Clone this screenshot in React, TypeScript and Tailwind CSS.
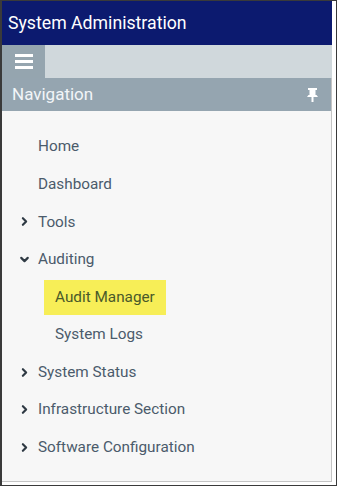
import { ChevronRight, ChevronDown } from "lucide-react";

type Item = { label: string; level: number; chevron?: "right" | "down"; active?: boolean };

const items: Item[] = [
  { label: "Home", level: 0 },
  { label: "Dashboard", level: 0 },
  { label: "Tools", level: 0, chevron: "right" },
  { label: "Auditing", level: 0, chevron: "down" },
  { label: "Audit Manager", level: 1, active: true },
  { label: "System Logs", level: 1 },
  { label: "System Status", level: 0, chevron: "right" },
  { label: "Infrastructure Section", level: 0, chevron: "right" },
  { label: "Software Configuration", level: 0, chevron: "right" },
];

function Pin() {
  return (
    <svg width="11" height="14" viewBox="0 0 11 14" fill="#ffffff">
      <rect x="1" y="0" width="9" height="2" />
      <rect x="2.5" y="2" width="6" height="5" />
      <polygon points="0,9 1.5,7 9.5,7 11,9" />
      <rect x="4.5" y="9" width="2" height="5" />
    </svg>
  );
}

export default function App() {
  return (
    <div
      className="w-[337px] h-[486px] bg-white border border-l-2 border-[#3a3a3a] flex flex-col overflow-hidden"
      style={{ fontFamily: "Roboto, 'Noto Sans', sans-serif" }}
    >
      <div className="w-[330px] flex flex-col flex-1">
        {/* Header */}
        <div className="h-[44px] bg-[#0c1a6f] flex items-center pl-[6px] text-white text-[17.7px] shrink-0">
          System Administration
        </div>

        {/* Toolbar */}
        <div className="h-[33px] bg-[#d0d8dc] flex shrink-0">
          <div className="w-[43px] bg-[#95a5af] flex items-center justify-center">
            <div className="flex flex-col gap-[3px] w-[18px]">
              <div className="h-[3px] bg-white" />
              <div className="h-[3px] bg-white" />
              <div className="h-[3px] bg-white" />
            </div>
          </div>
        </div>

        {/* Panel */}
        <div className="flex-1 mb-[3px] bg-[#f7f7f7] border-r border-b border-[#c4c4c4] flex flex-col">
          <div className="h-[33px] bg-[#95a5b0] flex items-center justify-between pl-[10px] pr-[13px] text-[#f2f5f8] text-[17px] shrink-0">
            <span>Navigation</span>
            <Pin />
          </div>
          <div className="pt-[17px] flex flex-col">
            {items.map((it) => (
              <div
                key={it.label}
                className={`h-[37.6px] flex items-center text-[15.3px] ${it.level === 1 ? "pl-[53px]" : "pl-[16px]"}`}
              >
                {it.level === 0 && (
                  <span className="w-[20px] flex items-center text-[#2f3a44]">
                    {it.chevron === "right" && <ChevronRight size={13} strokeWidth={4} />}
                    {it.chevron === "down" && <ChevronDown size={13} strokeWidth={4} />}
                  </span>
                )}
                <span
                  className={
                    it.active
                      ? "bg-[#f7ee57] text-[#4a5a2a] h-[35px] flex items-center px-[11px] -ml-[11px]"
                      : "text-[#4b5b6b]"
                  }
                >
                  {it.label}
                </span>
              </div>
            ))}
          </div>
        </div>
      </div>
    </div>
  );
}
